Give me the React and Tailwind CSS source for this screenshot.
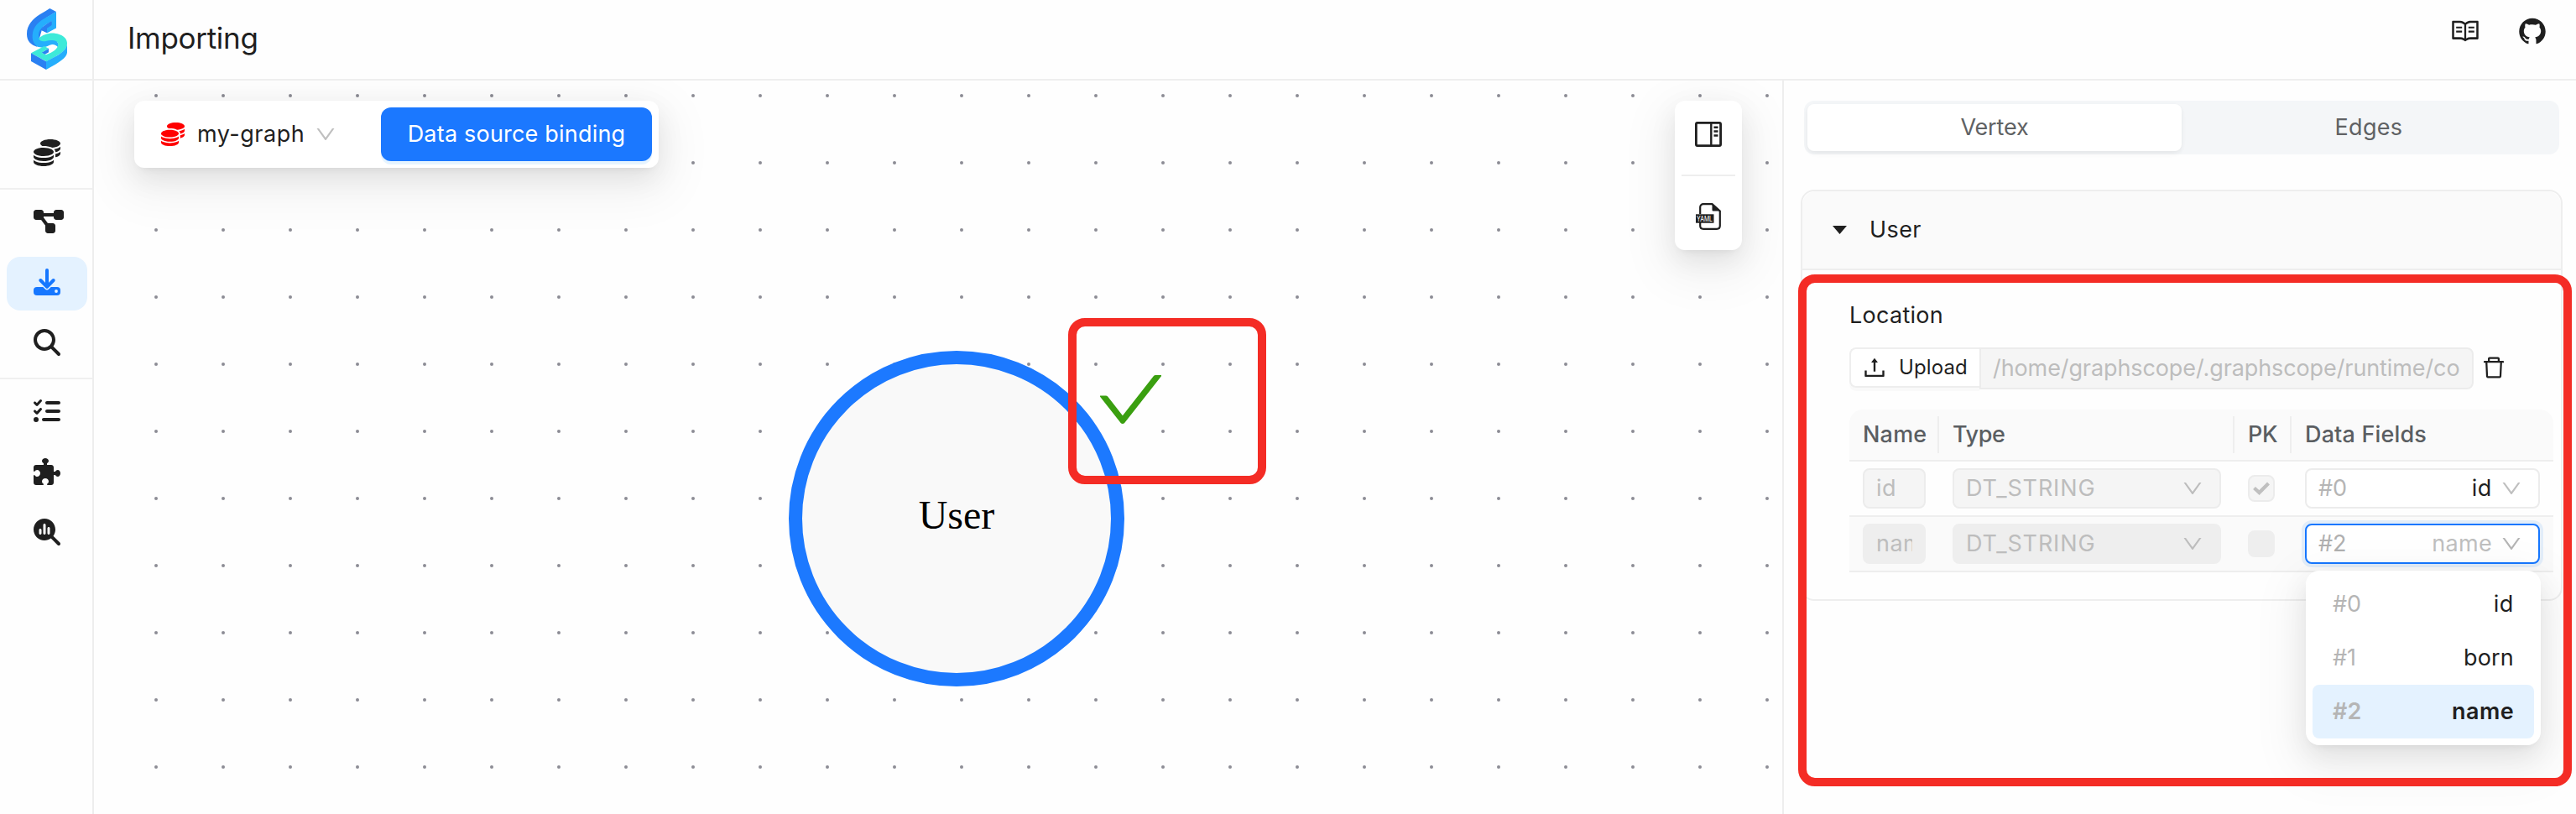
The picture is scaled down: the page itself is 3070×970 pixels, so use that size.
import {
  AiOutlineDelete,
  AiOutlineDown,
  AiOutlineRead,
  AiOutlineUpload,
  AiOutlineGithub,
} from 'react-icons/ai';
import {
  FaCoins,
  FaDiagramProject,
  FaListCheck,
  FaMagnifyingGlass,
  FaMagnifyingGlassChart,
} from 'react-icons/fa6';

function Logo() {
  return (
    <svg className="h-[73px] w-[48px]" viewBox="96 30 144 219" preserveAspectRatio="none">
      <path fill="#2a80f2" d="M178 30L201 42L165 64L150 106L132 167C112 160 96 148 96 122C96 88 118 68 142 52C154 44 166 38 178 30Z" />
      <path fill="#25aefc" d="M201 42V100L168 118L147 107L186 90V76C158 90 139 104 138 124C138 132 140 138 146 142L172 136L200 140L210 160L207 168C200 160 192 158 186 159C174 161 166 169 152 170L134 167C122 158 115 146 116 126C118 92 142 75 165 62Z" />
      <path fill="#2a80f2" d="M186 75V91L168 102V117L146 107C153 94 168 83 186 75Z" />
      <path fill="#25aefc" d="M185 90V76L201 78V100L168 118V101Z" />
      <path fill="#2a80f2" d="M174 173V187L160 195L148 188Z" />
      <path fill="#3dead9" d="M138 138C152 124 174 117 196 119C224 122 241 138 240 156C239 184 208 196 166 220L111 190L158 165L174 173L149 188L164 196C192 186 209 172 208 157C206 142 180 142 164 147C152 150 143 146 138 138Z" />
      <path fill="#2a80f2" d="M111 190L165 220V249L111 219Z" />
      <path fill="#25aefc" d="M165 220C208 197 238 184 240 156V188C238 206 214 222 165 249Z" />
    </svg>
  );
}

function ImportIcon() {
  return (
    <svg className="h-8 w-8" viewBox="0 0 32 32" fill="none">
      <rect x="0" y="22" width="32" height="10" rx="4" fill="#1677ff" />
      <circle cx="27" cy="27" r="1.9" fill="#e4f2ff" />
      <path d="M8.300 14L16 21.800L23.700 14" stroke="#e4f2ff" strokeWidth="7" strokeLinecap="round" strokeLinejoin="round" />
      <path d="M16 2V21M8.300 14L16 21.800L23.700 14" stroke="#1677ff" strokeWidth="4" strokeLinecap="round" strokeLinejoin="round" />
    </svg>
  );
}

function PuzzleIcon() {
  return (
    <svg className="h-8 w-8" viewBox="0 0 32 32" fill="#1f1f1f">
      <path d="M12 8V6.200C10.800 5.400 10 4.400 10 3.200C10 1.400 11.800 0 14 0S18 1.400 18 3.200C18 4.400 17.200 5.400 16 6.200V8H21C22.700 8 24 9.300 24 11V16H25.800C26.600 14.800 27.600 14 28.800 14C30.600 14 32 15.800 32 18S30.600 22 28.800 22C27.600 22 26.600 21.200 25.800 20H24V29C24 30.700 22.700 32 21 32H16.200V30.600C17.300 30 18 29 18 27.800C18 25.600 16.200 24 14 24S10 25.600 10 27.800C10 29 10.700 30 11.800 30.600V32H3C1.300 32 0 30.700 0 29V20.200H1.400C2 21.300 3 22 4.200 22C6.400 22 8 20.200 8 18S6.400 14 4.200 14C3 14 2 14.700 1.400 15.800H0V11C0 9.300 1.300 8 3 8Z" />
    </svg>
  );
}

function PanelIcon() {
  return (
    <svg className="h-[30px] w-8" viewBox="0 0 32 30" fill="none" stroke="#1f1f1f">
      <rect x="1.400" y="1.400" width="29.200" height="27.200" rx="1.500" strokeWidth="2.800" />
      <path d="M19.300 1V29" strokeWidth="2.400" />
      <path d="M22.500 6.700H27.500M22.500 11.500H27.500M22.500 16.500H27.500" strokeWidth="2.600" />
    </svg>
  );
}

function YamlIcon() {
  return (
    <svg className="h-8 w-8" viewBox="0 0 32 32" fill="none">
      <path d="M6.200 13V5C6.200 2.800 7.800 1.200 10 1.200H20.500L29.800 9.500V27C29.800 29.200 28.200 30.800 26 30.800H10C7.800 30.800 6.200 29.200 6.200 27V23" stroke="#1f1f1f" strokeWidth="2.200" />
      <path d="M20.500 1L30.500 9.500H22C21 9.500 20.500 9 20.500 8Z" fill="#1f1f1f" />
      <rect x="1" y="13.300" width="21.500" height="10.400" fill="#1f1f1f" />
      <text x="2" y="21.500" textLength="19" lengthAdjust="spacingAndGlyphs" fontSize="8.500" fontFamily="Inter, sans-serif" fill="#fff">YAML</text>
    </svg>
  );
}

function NavItem({ active, raised, children }) {
  return (
    <div className={`mx-2 flex h-16 w-24 items-center rounded-2xl pl-8 text-[#1f1f1f] ${active ? 'bg-[#e4f2ff]' : ''} ${raised ? 'pb-1' : ''}`}>
      {children}
    </div>
  );
}

function Sidebar() {
  return (
    <aside className="flex w-[112px] shrink-0 flex-col border-r-2 border-[#eee]">
      <div className="flex h-24 justify-center border-b-2 border-[#eee] pt-[10px] pl-[2px]">
        <Logo />
      </div>
      <div className="flex h-[130px] flex-col justify-end border-b-2 border-[#f0f0f0] pb-[10px]">
        <NavItem><FaCoins className="h-8 w-8" /></NavItem>
      </div>
      <div className="flex h-[226px] flex-col gap-2 border-b-2 border-[#f0f0f0] pt-2">
        <NavItem raised><FaDiagramProject className="h-8 w-9" /></NavItem>
        <NavItem raised active><ImportIcon /></NavItem>
        <NavItem raised><FaMagnifyingGlass className="h-8 w-8" /></NavItem>
      </div>
      <div className="flex flex-col gap-2 pt-[6px]">
        <NavItem><FaListCheck className="h-8 w-8" /></NavItem>
        <NavItem><PuzzleIcon /></NavItem>
        <NavItem><FaMagnifyingGlassChart className="h-8 w-8" /></NavItem>
      </div>
    </aside>
  );
}

const FLOAT_SHADOW =
  'shadow-[0_12px_32px_0_rgba(0,0,0,0.08),0_6px_12px_-8px_rgba(0,0,0,0.12),0_18px_56px_16px_rgba(0,0,0,0.05)]';

function Canvas() {
  return (
    <section className="relative h-full w-[2012px] overflow-hidden bg-[#fefefe]">
      <svg className="absolute inset-0 h-full w-full">
        <defs>
          <pattern id="dots" x="34" y="-22" width="80" height="80" patternUnits="userSpaceOnUse">
            <circle cx="40" cy="40" r="2" fill="#8c8c95" />
          </pattern>
        </defs>
        <rect width="100%" height="100%" fill="url(#dots)" />
      </svg>

      <div className="absolute top-[322px] left-[828px] flex h-[400px] w-[400px] items-center justify-center rounded-full border-[16px] border-[#1c79ff] bg-[#f9f9f9]">
        <span className="-mt-[8px] font-['Liberation_Serif',serif] text-[48px] leading-none text-black">User</span>
      </div>
      <svg className="absolute top-[351px] left-[1199px] h-[58px] w-[73px]" viewBox="105 190 813 644" preserveAspectRatio="none" fill="#3a9f10">
        <path d="M912 190h-69.900c-9.800 0-19.100 4.500-25.100 12.200L404.700 724.500 207 474a32 32 0 0 0-25.100-12.200H112c-6.700 0-10.400 7.700-6.300 12.900l273.900 347c12.800 16.200 37.400 16.200 50.300 0l488.400-618.900c4.100-5.100.4-12.800-6.300-12.800z" />
      </svg>

      <div className={`absolute top-6 left-12 flex h-20 w-[625px] items-center justify-between rounded-xl bg-white pr-2 pl-8 ${FLOAT_SHADOW}`}>
        <div className="flex items-center">
          <FaCoins className="h-7 w-7 text-[#ff0000]" />
          <span className="ml-[15px] text-[27px] tracking-[0.5px]">my-graph</span>
          <AiOutlineDown className="ml-[11px] h-7 w-7 text-[#bfbfbf]" />
        </div>
        <button className="h-16 w-[323px] rounded-xl bg-[#1b78ff] text-[27px] tracking-[0.2px] text-white shadow-[0_4px_0_rgba(5,145,255,0.1)]">
          Data source binding
        </button>
      </div>

      <div className={`absolute top-6 left-[1884px] flex h-[178px] w-20 flex-col items-center rounded-xl bg-white pt-[25px] ${FLOAT_SHADOW}`}>
        <PanelIcon />
        <div className="mt-[33px] h-[2px] w-16 bg-[#eee]" />
        <div className="mt-8"><YamlIcon /></div>
      </div>
    </section>
  );
}

function DisabledBox({ dark, className, children }) {
  return (
    <div className={`flex h-12 items-center rounded-lg border-2 pl-[14px] text-[27px] text-[#bdbdbd] ${dark ? 'border-[#eeeeee] bg-[#eeeeee]' : 'border-[#ececec] bg-[#f5f5f5]'} ${className}`}>
      {children}
    </div>
  );
}

function Row({ name, dark, pk, field }) {
  return (
    <div className={`flex h-[66px] items-center border-b-2 border-[#eee] pl-4 ${dark ? 'bg-[#fafafa]' : ''}`}>
      <DisabledBox dark={dark} className="w-[75px]">
        <span className="w-[43px] overflow-hidden tracking-[0.5px]">{name}</span>
      </DisabledBox>
      <DisabledBox dark={dark} className="ml-8 w-80 justify-between pr-[18px]">
        <span className="tracking-[0.85px]">DT_STRING</span>
        <AiOutlineDown className="h-7 w-7" />
      </DisabledBox>
      <div className={`ml-8 flex h-8 w-8 items-center justify-center rounded-lg border-2 ${dark ? 'border-[#eeeeee] bg-[#eeeeee]' : 'border-[#ececec] bg-[#f5f5f5]'}`}>
        {pk && (
          <svg className="h-4 w-5" viewBox="0 0 20 16" fill="none" stroke="#bfbfbf" strokeWidth="4.200">
            <path d="M1.500 7.500L7.500 13L18.500 2" />
          </svg>
        )}
      </div>
      {field}
    </div>
  );
}

function Dropdown() {
  return (
    <div className={`absolute top-[680px] left-[2748px] flex h-52 w-[280px] flex-col rounded-2xl bg-white p-2 text-[27px] ${FLOAT_SHADOW}`}>
      <div className="flex h-16 items-center justify-between px-6">
        <span className="text-[#b5b5b5]">#0</span>
        <span className="tracking-[0.6px]">id</span>
      </div>
      <div className="flex h-16 items-center justify-between px-6">
        <span className="text-[#b5b5b5]">#1</span>
        <span className="tracking-[0.2px]">born</span>
      </div>
      <div className="flex h-16 items-center justify-between rounded-lg bg-[#e4f2ff] px-6 font-semibold">
        <span className="text-[#b5b5b5]">#2</span>
        <span className="tracking-[0.4px]">name</span>
      </div>
    </div>
  );
}

function SidePanel() {
  return (
    <section className="h-full w-[946px] border-l-2 border-[#eee] pt-6 pr-4 pl-5">
      <div className="mr-1 ml-1 flex h-16 rounded-xl bg-[#f4f6f8] p-1 text-[27px] text-[#606264]">
        <div className="flex flex-1 items-center justify-center rounded-lg bg-white tracking-[-0.15px] shadow-[0_2px_4px_0_rgba(0,0,0,0.04),0_2px_12px_-2px_rgba(0,0,0,0.03),0_4px_8px_0_rgba(0,0,0,0.02)]">Vertex</div>
        <div className="flex flex-1 items-center justify-center tracking-[0.3px]">Edges</div>
      </div>

      <div className="mt-[42px] h-[490px] rounded-2xl border-2 border-[#eee]">
        <div className="flex h-[94px] items-center rounded-t-2xl border-b-2 border-[#eee] bg-[#fafafa] pl-9">
          <svg className="h-[10px] w-[17px]" viewBox="0 0 17 10"><path d="M0 0H17L8.500 10Z" fill="#1f1f1f" /></svg>
          <span className="ml-[27px] text-[27px] tracking-[0.4px]">User</span>
        </div>
        <div className="pt-[34px] pr-[9px] pl-14">
          <div className="flex h-10 items-center text-[27px] tracking-[0.27px]">Location</div>
          <div className="mt-[18px] flex h-[50px]">
            <div className="flex h-12 w-[155px] items-center rounded-l-lg border-2 border-r-0 border-[#eee] bg-white pl-3 shadow-[0_4px_0_rgba(0,0,0,0.02)]">
              <AiOutlineUpload className="h-8 w-8" />
              <span className="ml-[13px] text-[24px] tracking-[0.1px]">Upload</span>
            </div>
            <div className="flex h-[50px] w-[589px] items-center rounded-r-lg border-2 border-[#ececec] bg-[#f5f5f5] pl-[14px] text-[27px] whitespace-nowrap text-[#bdbdbd]">
              <span className="tracking-[-0.1px]">/home/graphscope/.graphscope/runtime/co</span>
            </div>
            <AiOutlineDelete className="mt-[8px] ml-[8px] h-8 w-8" />
          </div>

          <div className="mt-6">
            <div className="flex h-[62px] items-center rounded-t-2xl border-b-2 border-[#eee] bg-[#fafafa] text-[27px] font-medium text-[#5a5e62]">
              <span className="w-[105px] pl-4 tracking-[0.2px]">Name</span>
              <span className="h-11 w-[2px] bg-[#eee]" />
              <span className="w-[350px] pl-4 tracking-[-0.4px]">Type</span>
              <span className="h-11 w-[2px] bg-[#eee]" />
              <span className="w-[66px] pl-4 tracking-[-0.4px]">PK</span>
              <span className="h-11 w-[2px] bg-[#eee]" />
              <span className="pl-4 tracking-[0.15px]">Data Fields</span>
            </div>
            <Row
              name="id"
              pk
              field={
                <div className="ml-9 flex h-12 w-[280px] items-center rounded-lg border-2 border-[#ececec] bg-white pr-[18px] pl-[14px] text-[27px]">
                  <span className="text-[#b5b5b5]">#0</span>
                  <span className="ml-auto tracking-[0.6px]">id</span>
                  <AiOutlineDown className="ml-[9px] h-7 w-7 text-[#bfbfbf]" />
                </div>
              }
            />
            <Row
              name="name"
              dark
              field={
                <div className="ml-9 flex h-12 w-[280px] items-center rounded-lg border-2 border-[#1677ff] bg-white pr-[18px] pl-[14px] text-[27px] shadow-[0_0_0_4px_#e2edf9]">
                  <span className="text-[#b0b0b0]">#2</span>
                  <span className="ml-auto tracking-[0.3px] text-[#bfbfbf]">name</span>
                  <AiOutlineDown className="ml-[9px] h-7 w-7 text-[#b5b5b5]" />
                </div>
              }
            />
          </div>
        </div>
      </div>
    </section>
  );
}

export default function App() {
  return (
    <div className="relative flex h-[970px] w-[3070px] overflow-hidden bg-[#fefefe] font-['Inter',sans-serif] text-[#1f1f1f]">
      <Sidebar />
      <main className="flex flex-1 flex-col">
        <header className="flex h-24 items-center justify-between border-b-2 border-[#eee] pr-[34px] pb-1 pl-10">
          <h1 className="text-[35px] tracking-[-0.3px]">Importing</h1>
          <div className="-mt-4 flex items-center gap-11">
            <AiOutlineRead className="h-9 w-9" />
            <AiOutlineGithub className="h-9 w-9" />
          </div>
        </header>
        <div className="flex min-h-0 flex-1">
          <Canvas />
          <SidePanel />
        </div>
      </main>
      <Dropdown />
      <div className="absolute top-[379px] left-[1273px] h-[198px] w-[236px] rounded-[20px] border-[10px] border-[#f42c25]" />
      <div className="absolute top-[327px] left-[2143px] h-[610px] w-[922px] rounded-[20px] border-[10px] border-[#f42c25]" />
    </div>
  );
}
